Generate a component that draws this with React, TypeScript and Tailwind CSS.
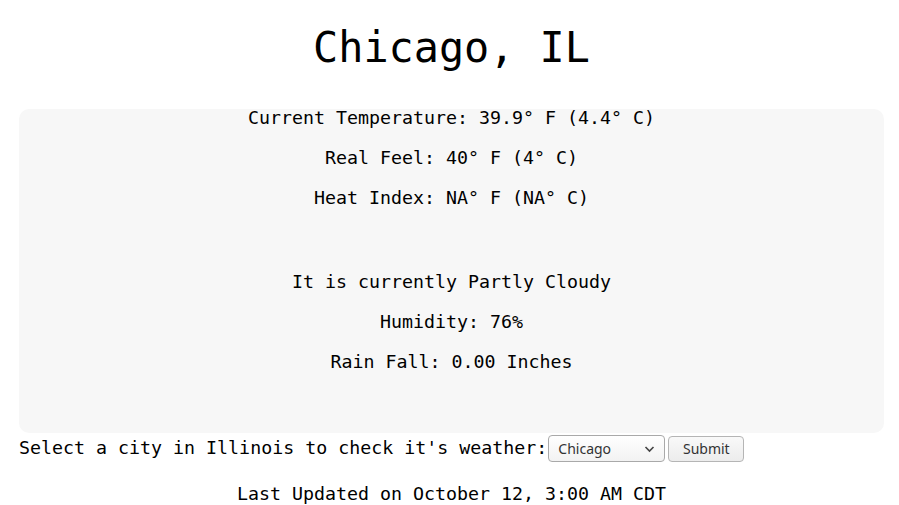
import React from "react";

export default function App() {
  const mono = { fontFamily: '"DejaVu Sans Mono", monospace' };
  return (
    <div className="w-[899px] min-h-[505px] bg-white text-black" style={mono}>
      <div className="ml-[19px] w-[865px]">
        <h1 className="pt-[24px] h-[72px] text-center text-[41.8px] leading-[48px] font-normal">Chicago, IL</h1>
        <div className="mt-[37px] h-[324px] bg-[#f7f7f7] rounded-[10px] flex flex-col items-center text-[18.3px] leading-[18px]">
          <div>Current Temperature: 39.9° F (4.4° C)</div>
          <div className="mt-[22px]">Real Feel: 40° F (4° C)</div>
          <div className="mt-[22px]">Heat Index: NA° F (NA° C)</div>
          <div className="mt-[66px]">It is currently Partly Cloudy</div>
          <div className="mt-[22px]">Humidity: 76%</div>
          <div className="mt-[22px]">Rain Fall: 0.00 Inches</div>
        </div>
        <div className="mt-[2px] flex items-center h-[27px] text-[18.3px] leading-[18px]">
          <span className="-mt-[1px]">Select a city in Illinois to check it's weather:</span>
          <div className="relative ml-[1px] w-[117px] h-[27px] border border-[#a9a9a9] rounded-[4px] bg-gradient-to-b from-[#ffffff] to-[#f2f2f2] flex items-center pl-[9px] text-[14px] text-[#333]" style={{ fontFamily: '"Noto Sans", sans-serif' }}>
            <span>Chicago</span>
            <svg className="absolute right-[9px] top-[9px]" width="11" height="8" viewBox="0 0 11 8" fill="none" stroke="#444" strokeWidth="1.6">
              <path d="M1.5 2 L5.5 6 L9.5 2" />
            </svg>
          </div>
          <button className="ml-[3px] w-[76px] h-[26px] border border-[#b5b5b5] rounded-[4px] bg-gradient-to-b from-[#f9f9f9] to-[#ececec] text-[14px] text-[#333] flex items-center justify-center" style={{ fontFamily: '"Noto Sans", sans-serif' }}>
            Submit
          </button>
        </div>
        <div className="mt-[23px] text-center text-[18.3px] leading-[18px]">Last Updated on October 12, 3:00 AM CDT</div>
      </div>
    </div>
  );
}
